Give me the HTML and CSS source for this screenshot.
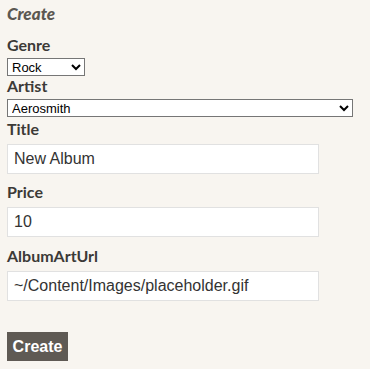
FILE: index.html
```html
<!DOCTYPE html>
<html>
<head>
<meta charset="utf-8">
<link rel="stylesheet" href="styles.css">
</head>
<body>
<h2 class="title">Create</h2>
<form class="form">
  <div class="field">
    <label class="label">Genre</label>
    <select class="select select-genre"><option>Rock</option></select>
  </div>
  <div class="field">
    <label class="label">Artist</label>
    <select class="select select-artist"><option>Aerosmith</option></select>
  </div>
  <div class="field field-text">
    <label class="label">Title</label>
    <input class="input" type="text" value="New Album">
  </div>
  <div class="field field-text field-wide-gap">
    <label class="label">Price</label>
    <input class="input" type="text" value="10">
  </div>
  <div class="field field-text">
    <label class="label">AlbumArtUrl</label>
    <input class="input" type="text" value="~/Content/Images/placeholder.gif">
  </div>
  <div class="actions">
    <button class="button" type="button">Create</button>
  </div>
</form>
</body>
</html>
```

FILE: styles.css
```css
html, body {
  background: #f8f5f0;
}
body {
  margin: 0;
  padding: 4px 7px;
  font-family: Lato, "Open Sans", sans-serif;
  color: #3c3a37;
}
.title {
  margin: 0;
  font-size: 17px;
  line-height: 20px;
  font-style: italic;
  font-weight: 900;
  color: #5b5852;
}
.form {
  display: flex;
  flex-direction: column;
  margin-top: 11px;
}
.field {
  display: flex;
  flex-direction: column;
  align-items: flex-start;
  margin-bottom: 0;
}
.label {
  font-size: 16px;
  font-weight: 700;
  line-height: 20px;
  margin-bottom: 3px;
}
.select {
  font-family: Arial, "Liberation Sans", sans-serif;
  font-size: 13px;
  height: 18px;
  padding: 0;
  border: 1px solid #767676;
  background: #fff;
  color: #000;
  border-radius: 0;
}
.select-genre { width: 78px; }
.select-artist { width: 346px; }
.field-text .label {
  margin-top: 2px;
  margin-bottom: 5px;
}
.field-text {
  margin-bottom: 6px;
}
.field-text.field-wide-gap {
  margin-bottom: 7px;
}
.input {
  box-sizing: border-box;
  width: 312px;
  height: 30px;
  padding: 0 6px;
  border: 1px solid #e1e1e1;
  background: #fff;
  font-family: Arial, "Liberation Sans", sans-serif;
  font-size: 16px;
  color: #333;
  outline: none;
}
.actions {
  margin-top: 25px;
}
.button {
  box-sizing: border-box;
  height: 29px;
  width: 61px;
  padding: 0;
  border: none;
  background: #5f5a54;
  color: #fff;
  font-family: Arial, "Liberation Sans", sans-serif;
  font-weight: 700;
  font-size: 16px;
}
```
